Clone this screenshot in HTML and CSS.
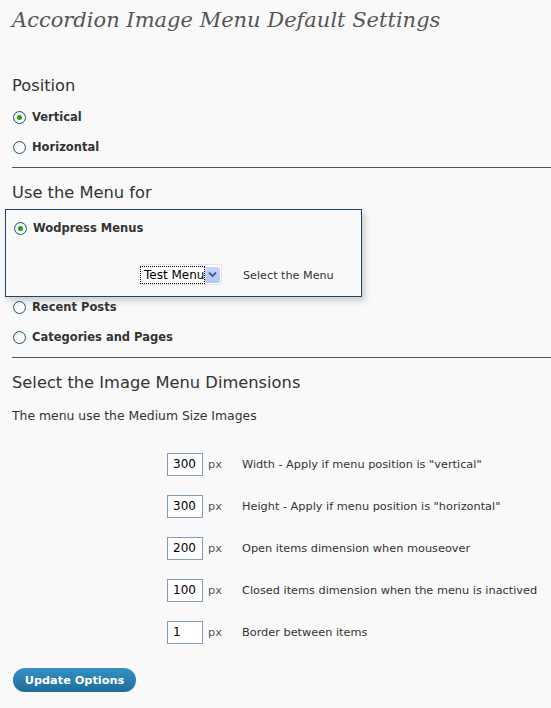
FILE: index.html
```html
<!DOCTYPE html>
<html>
<head>
<meta charset="utf-8">
<link rel="stylesheet" href="styles.css">
</head>
<body>
<div class="wrap">
  <h2 class="title">Accordion Image Menu Default Settings</h2>

  <h3 class="section">Position</h3>
  <label class="opt"><span class="radio on"></span>Vertical</label>
  <label class="opt"><span class="radio"></span>Horizontal</label>
  <hr class="sep">

  <h3 class="section">Use the Menu for</h3>
  <div class="box">
    <label class="opt"><span class="radio on"></span>Wodpress Menus</label>
    <div class="menu-row">
      <span class="select"><span class="sel-text">Test Menu</span><span class="sel-btn"><svg width="11" height="9" viewBox="0 0 11 9"><path d="M2 2.5 L5.5 6 L9 2.5" fill="none" stroke="#4d6185" stroke-width="2"/></svg></span></span>
      <span class="hint">Select the Menu</span>
    </div>
  </div>
  <label class="opt after-box"><span class="radio"></span>Recent Posts</label>
  <label class="opt"><span class="radio"></span>Categories and Pages</label>
  <hr class="sep">

  <h3 class="section">Select the Image Menu Dimensions</h3>
  <p class="note">The menu use the Medium Size Images</p>

  <div class="dims">
    <div class="dim"><span class="field">300</span><span class="unit">px</span><span class="desc">Width - Apply if menu position is "vertical"</span></div>
    <div class="dim"><span class="field">300</span><span class="unit">px</span><span class="desc">Height - Apply if menu position is "horizontal"</span></div>
    <div class="dim"><span class="field">200</span><span class="unit">px</span><span class="desc">Open items dimension when mouseover</span></div>
    <div class="dim"><span class="field">100</span><span class="unit">px</span><span class="desc">Closed items dimension when the menu is inactived</span></div>
    <div class="dim"><span class="field">1</span><span class="unit">px</span><span class="desc">Border between items</span></div>
  </div>

  <button class="btn">Update Options</button>
</div>
</body>
</html>
```

FILE: styles.css
```css
html, body {
  margin: 0;
  padding: 0;
  background: #f9f9f9;
}
body {
  font-family: "DejaVu Sans", Verdana, sans-serif;
  font-size: 11px;
  color: #333;
}
.wrap {
  padding: 0 0 0 12px;
  width: 539px;
}
.title {
  margin: 0;
  padding-top: 7px;
  height: 69px;
  line-height: 26px;
  font-family: "DejaVu Serif", Georgia, serif;
  font-style: italic;
  font-weight: normal;
  font-size: 21px;
  color: #555;
}
.section {
  margin: 0;
  font-weight: normal;
  font-size: 16.3px;
  color: #333;
  height: 26px;
  line-height: 20px;
}
.opt {
  display: flex;
  align-items: center;
  height: 30px;
  font-weight: bold;
  font-size: 11.5px;
  color: #333;
  margin-left: 1px;
}
.opt.after-box {
  margin-top: -5px;
}
.radio {
  box-sizing: border-box;
  width: 13px;
  height: 13px;
  border-radius: 50%;
  border: 1px solid #1c5180;
  background: radial-gradient(circle at 65% 65%, #fff 20%, #e3e3dc 100%);
  margin-right: 6px;
  position: relative;
}
.radio.on::after {
  content: "";
  position: absolute;
  left: 3px;
  top: 3px;
  width: 5px;
  height: 5px;
  border-radius: 50%;
  background: #21a121;
}
.sep {
  border: 0;
  border-top: 1px solid #555;
  margin: 5px 0 15px;
  height: 0;
}
.box {
  margin-left: -7px;
  width: 357px;
  height: 88px;
  box-sizing: border-box;
  border: 1px solid #1e4470;
  padding: 3px 0 0 7px;
  box-shadow: 3px 4px 6px rgba(0, 0, 0, 0.18);
  background: #f9f9f9;
}
.menu-row {
  display: flex;
  align-items: center;
  margin-top: 21px;
  padding-left: 125px;
}
.select {
  display: flex;
  align-items: center;
  height: 19px;
  border: 1px solid #e2e2e2;
  border-radius: 3px;
  background: #fff;
  padding: 0 1px;
}
.sel-text {
  border: 1px dotted #000;
  font-size: 12px;
  color: #000;
  padding: 0 1px 0 3px;
  line-height: 16px;
  width: 59px;
  overflow: hidden;
  white-space: nowrap;
}
.sel-btn {
  width: 15px;
  height: 16px;
  background: linear-gradient(#c6d7fb, #b4c8f7);
  border-radius: 2px;
  display: flex;
  align-items: center;
  justify-content: center;
}
.hint {
  margin-left: 21px;
  font-size: 11.2px;
  color: #333;
  margin-top: 2px;
}
.note {
  margin: 9px 0 0;
  height: 35px;
  line-height: 16px;
  font-size: 12.4px;
  color: #333;
}
.dims {
  margin-left: 155px;
}
.dim {
  display: flex;
  align-items: center;
  height: 42px;
}
.field {
  box-sizing: border-box;
  width: 36px;
  height: 23px;
  border: 1px solid #7f9db9;
  background: #fff;
  font-size: 12px;
  line-height: 21px;
  padding-left: 5px;
  color: #000;
}
.unit {
  width: 39px;
  padding-left: 5px;
  box-sizing: border-box;
  color: #555;
  font-size: 11.3px;
}
.desc {
  font-size: 11.3px;
  color: #333;
}
.btn {
  display: block;
  margin-top: 15px;
  margin-left: 1px;
  width: 123px;
  height: 24px;
  border-radius: 12px;
  border: 0;
  background: linear-gradient(#3590c4, #1f6c9b);
  color: #fff;
  font-family: "DejaVu Sans", Verdana, sans-serif;
  font-weight: bold;
  font-size: 11.3px;
  padding: 0;
  box-shadow: 0 1px 2px rgba(0,0,0,0.12);
}
```
